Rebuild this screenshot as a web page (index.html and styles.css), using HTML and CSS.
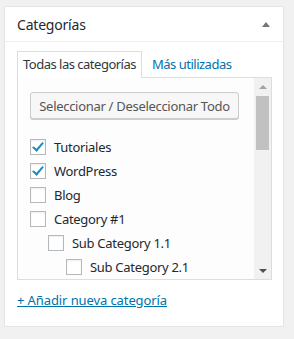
FILE: index.html
```html
<!DOCTYPE html>
<html lang="es">
<head>
    <meta charset="UTF-8">
    <meta name="viewport" content="width=device-width, initial-scale=1.0">
    <title>Categorías</title>
    <link rel="stylesheet" href="styles.css">
</head>
<body>
    <div class="postbox">
        <div class="postbox-header">
            <h2>Categorías</h2>
            <span class="toggle-arrow"></span>
        </div>
        <div class="inside">
            <ul class="tabs">
                <li class="tab active">Todas las categorías</li>
                <li class="tab">Más utilizadas</li>
            </ul>
            <div class="tabs-panel">
                <div class="list">
                    <button class="select-all">Seleccionar / Deseleccionar Todo</button>
                    <ul class="checklist">
                        <li><span class="check checked"></span>Tutoriales</li>
                        <li><span class="check checked"></span>WordPress</li>
                        <li><span class="check"></span>Blog</li>
                        <li><span class="check"></span>Category #1</li>
                        <li class="level-1"><span class="check"></span>Sub Category 1.1</li>
                        <li class="level-2"><span class="check"></span>Sub Category 2.1</li>
                    </ul>
                </div>
                <div class="scrollbar">
                    <span class="arrow-up"></span>
                    <div class="track"><div class="thumb"></div></div>
                    <span class="arrow-down"></span>
                </div>
            </div>
            <a class="add-new" href="#">+ Añadir nueva categoría</a>
        </div>
    </div>
</body>
</html>
```

FILE: styles.css
```css
body {
    margin: 0;
    padding: 6px 10px 0 4px;
    background-color: #f1f1f1;
    font-family: "Noto Sans", sans-serif;
    font-size: 13px;
    color: #23282d;
}
.postbox {
    background: white;
    border: 1px solid #e5e5e5;
    box-shadow: 0 1px 1px rgba(0,0,0,0.04);
    height: 321px;
    box-sizing: border-box;
}
.postbox-header {
    display: flex;
    justify-content: space-between;
    align-items: center;
    height: 34px;
    padding: 0 13px 0 12px;
    border-bottom: 1px solid #eee;
}
.postbox-header h2 {
    margin: 0;
    font-size: 14px;
    font-weight: normal;
    letter-spacing: -0.2px;
}
.toggle-arrow {
    width: 0;
    height: 0;
    border-left: 4px solid transparent;
    border-right: 4px solid transparent;
    border-bottom: 5px solid #72777c;
}
.inside {
    padding: 9px 11px 0 12px;
}
.tabs {
    list-style: none;
    margin: 0;
    padding: 0;
    display: flex;
}
.tab {
    padding: 0 5px;
    height: 25px;
    line-height: 25px;
    color: #0073aa;
    border: 1px solid transparent;
    border-bottom: none;
    margin-right: 4px;
    letter-spacing: -0.5px;
}
.tab.active {
    color: #32373c;
    border-color: #ddd;
    background: white;
    margin-bottom: -1px;
    height: 26px;
    position: relative;
}
.tabs-panel {
    display: flex;
    border: 1px solid #ddd;
    height: 203px;
    box-sizing: border-box;
    overflow: hidden;
    background: #fdfdfd;
}
.list {
    flex: 1;
    padding: 14px 0 0 12px;
}
.select-all {
    font-family: inherit;
    font-size: 13px;
    color: #555;
    background: #f7f7f7;
    border: 1px solid #ccc;
    border-radius: 3px;
    box-shadow: 0 1px 0 #ccc;
    height: 27px;
    width: 209px;
    padding: 0;
    letter-spacing: -0.3px;
}
.checklist {
    list-style: none;
    margin: 16px 0 0 0;
    padding: 0;
}
.checklist li {
    display: flex;
    align-items: center;
    height: 24px;
    letter-spacing: -0.3px;
}
.checklist li.level-1 {
    padding-left: 18px;
}
.checklist li.level-2 {
    padding-left: 36px;
}
.check {
    width: 16px;
    height: 16px;
    box-sizing: border-box;
    border: 1px solid #b4b9be;
    background: white;
    box-shadow: inset 0 1px 2px rgba(0,0,0,0.07);
    margin-right: 8px;
    position: relative;
}
.check.checked::after {
    content: "";
    position: absolute;
    left: 4px;
    top: 0px;
    width: 4px;
    height: 9px;
    border-right: 2px solid #1e8cbe;
    border-bottom: 2px solid #1e8cbe;
    transform: rotate(40deg);
}
.scrollbar {
    width: 17px;
    display: flex;
    flex-direction: column;
    align-items: center;
    background: #f1f1f1;
}
.arrow-up, .arrow-down {
    height: 17px;
    display: flex;
    align-items: center;
}
.arrow-up::before {
    content: "";
    border-left: 4px solid transparent;
    border-right: 4px solid transparent;
    border-bottom: 4px solid #a3a3a3;
}
.arrow-down::before {
    content: "";
    border-left: 4px solid transparent;
    border-right: 4px solid transparent;
    border-top: 4px solid #505050;
}
.track {
    flex: 1;
    width: 100%;
    padding: 1px 2px;
    box-sizing: border-box;
}
.thumb {
    height: 54px;
    background: #c1c1c1;
}
.add-new {
    display: inline-block;
    margin-top: 11px;
    color: #0073aa;
    font-size: 13px;
    letter-spacing: -0.1px;
}
```
